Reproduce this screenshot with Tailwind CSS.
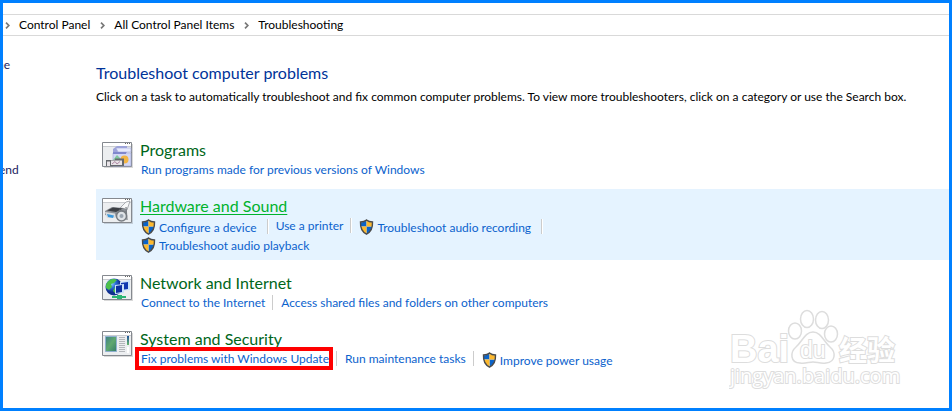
<!DOCTYPE html>
<html lang="en">
  <head>
    <meta charset="UTF-8" />
    <meta name="viewport" content="width=device-width, initial-scale=1.0" />
    <title>Troubleshooting</title>
    <script src="https://cdn.jsdelivr.net/npm/@tailwindcss/browser@4"></script>
  </head>
  <body class="relative flex min-h-screen flex-col overflow-x-hidden border-3 border-[#0080ff] bg-white font-[Lato,'Open_Sans',sans-serif] text-[12px] text-black">
    <!-- Shared symbols -->
    <svg class="absolute size-0">
      <clipPath id="shield-clip"><path d="M7 1.2 C5.3 2.7 3.2 3.2 1.1 3.2 C.8 8.5 2.4 12.6 7 14.8 C11.6 12.6 13.2 8.5 12.9 3.2 C10.8 3.2 8.7 2.7 7 1.2Z" /></clipPath>
      <symbol id="shield" viewBox="0 0 14 16">
        <g clip-path="url(#shield-clip)">
          <path fill="#0a63c9" d="M0 0H7V7.6H0zM7 7.6H14V16H7z" />
          <path fill="#fdb92e" d="M7 0H14V7.6H7zM0 7.6H7V16H0z" />
        </g>
        <path fill="none" stroke="#4a4a4a" stroke-width="1.4" d="M7 1 C5.3 2.5 3.2 3 1 3 C.7 8.5 2.4 12.8 7 15.1 C11.6 12.8 13.3 8.5 13 3 C10.8 3 8.7 2.5 7 1Z" />
      </symbol>
      <symbol id="chevron" viewBox="0 0 5 7">
        <path fill="none" stroke="#777" stroke-width="1.7" d="M1 .7 3.8 3.5 1 6.3" />
      </symbol>
      <symbol id="window" viewBox="0 0 31 26">
        <path fill="#000" opacity=".15" d="M2 2H31V26H2z" />
        <path fill="#eceef0" stroke="#85898f" d="M.5 .5H29.5V24.5H.5z" />
        <path fill="#fff" d="M1 1H29V4H1z" />
        <path stroke="#c9ccd0" d="M1 4.5H29" />
        <path fill="#666" d="M23 1h1v1h-1zM25 1h1v1h-1zM27 1h1v1h-1z" />
      </symbol>
    </svg>

    <!-- Address bar -->
    <nav class="mt-[11px] flex h-[22px] shrink-0 items-center border-y border-[#d9d9d9] pl-0.5" aria-label="Breadcrumb">
      <svg class="mr-[9px] h-[7px] w-[5px]"><use href="#chevron" /></svg>
      <a href="#">Control Panel</a>
      <svg class="ml-2.5 mr-[9px] h-[7px] w-[5px]"><use href="#chevron" /></svg>
      <a href="#">All Control Panel Items</a>
      <svg class="ml-2.5 mr-[9px] h-[7px] w-[5px]"><use href="#chevron" /></svg>
      <a href="#">Troubleshooting</a>
    </nav>

    <div class="flex grow">
      <!-- Side links, scrolled out to the left -->
      <aside class="flex w-[93px] shrink-0 flex-col items-start gap-[89px] overflow-hidden pt-[21px] leading-4 text-[#1a1a5e]">
        <a href="#" class="-ml-1.5">ne</a>
        <a href="#" class="-ml-1">end</a>
      </aside>

      <main class="min-w-0 grow pt-[25px]">
        <h1 class="text-[16px] leading-6 text-[#003399]">Troubleshoot computer problems</h1>
        <p class="mt-1 leading-4">Click on a task to automatically troubleshoot and fix common computer problems. To view more troubleshooters, click on a category or use the Search box.</p>

        <div class="mt-7 flex flex-col gap-1.5 leading-[15px] text-[#0b62cd]">
          <section class="flex gap-[7px] py-1.5 pl-1.5">
            <svg class="mt-[3px] h-[26px] w-[31px] shrink-0" viewBox="0 0 31 26">
              <use href="#window" />
              <path fill="#9da3da" d="M11 7 15 4H25V18H11z" />
              <path fill="#e6e9fc" stroke="#a3a8d8" stroke-width=".6" d="M14 6H29V10H16z" />
              <path fill="#d3d7f5" stroke="#a3a8d8" stroke-width=".6" d="M11 11H29V24H11z" />
              <path fill="#8087cc" d="M11 10H24V12H11z" />
              <path fill="#7fc79b" d="M11 18 15 13 20 18z" />
              <circle cx="22.500" cy="17.500" r="4" fill="#f2b544" />
              <path fill="#66696d" d="M4 18H13V16.500H22V24H4z" />
              <path fill="#e9e4e8" d="M5 19.500H8V24H5zM9 18.500H20V23H9z" />
              <path fill="none" stroke="#b08aa5" d="M10 22 13 19.500 15 22 18 19.500" />
            </svg>
            <div>
              <h2 class="mb-px text-[16px] leading-[22px] text-[#00661a]"><a href="#">Programs</a></h2>
              <a href="#" class="ml-px">Run programs made for previous versions of Windows</a>
            </div>
          </section>

          <section class="flex gap-[7px] bg-[#e5f3ff] py-1.5 pl-1.5">
            <svg class="mt-[3px] h-[26px] w-[31px] shrink-0" viewBox="0 0 31 26">
              <use href="#window" />
              <path fill="#f7f8f9" stroke="#a8abb0" d="M18 10 24 4 28 3 25 12z" />
              <path fill="#8d9197" d="M3 13 10 9 22 10 25 12 24 17 12 19 3 17z" />
              <path fill="#3d4045" d="M5 12.500 11 9.500 21 10.500 14 14z" />
              <path fill="#d9dcdf" d="M3 14 13 15.500 14 20 5 20z" />
              <path fill="#3a98dc" d="M5 16 12 17.500 11 20 6 19z" />
              <circle cx="19.500" cy="18" r="5" fill="#dfe3e7" stroke="#777c82" stroke-width="1.5" />
              <circle cx="19.500" cy="18" r="2" fill="#9aa5b0" />
              <path fill="none" stroke="#777c82" stroke-width="1.2" d="M24 9 25 22M17 12 24 14" />
            </svg>
            <div>
              <h2 class="mb-px text-[16px] leading-[22px] text-[#00b22d]"><a href="#" class="underline underline-offset-2">Hardware and Sound</a></h2>
              <div class="ml-px flex items-start">
                <a href="#" class="flex h-[18px] items-center gap-[3px]"><svg class="h-4 w-[15px]"><use href="#shield" /></svg>Configure a device</a>
                <span class="ml-2.5 mr-[7px] mt-px h-[15px] w-0.5 border-l border-[#ccc] bg-white"></span>
                <a href="#">Use a printer</a>
                <span class="mx-[7px] h-[15px] w-0.5 border-l border-[#ccc] bg-white"></span>
                <a href="#" class="flex h-[18px] items-center gap-[3px]"><svg class="h-4 w-[15px]"><use href="#shield" /></svg>Troubleshoot audio recording</a>
                <span class="ml-2.5 mt-px h-[15px] w-0.5 border-l border-[#ccc] bg-white"></span>
              </div>
              <a href="#" class="ml-px flex h-[18px] items-center gap-[3px]"><svg class="h-4 w-[15px]"><use href="#shield" /></svg>Troubleshoot audio playback</a>
            </div>
          </section>

          <section class="flex gap-[7px] py-1.5 pl-1.5">
            <svg class="mt-[3px] h-[26px] w-[31px] shrink-0" viewBox="0 0 31 26">
              <defs>
                <radialGradient id="globe" cx=".35" cy=".3"><stop offset="0" stop-color="#8fd0ff" /><stop offset=".5" stop-color="#2b6fd6" /><stop offset="1" stop-color="#10308f" /></radialGradient>
              </defs>
              <use href="#window" />
              <circle cx="12" cy="12" r="8.5" fill="url(#globe)" />
              <path fill="#4dc04a" d="M4 10 C6 4 12 3 15 5 L12 8 9 9 10 12 7 15 4 13zM13 12 17 13 14 19 11 16z" />
              <path fill="#c9e2fa" d="M18 7 28 5V15L18 16z" />
              <path fill="#1039b0" d="M19 8 26 7V14L19 15z" />
              <path fill="#c9e2fa" d="M13 10 22 9V18L13 19z" />
              <path fill="#0d2f9f" d="M14 11 20 10V17L14 18z" />
              <path fill="#2bb673" d="M10 21H24V23H10zM15 20H20V24H15z" />
            </svg>
            <div>
              <h2 class="mb-px text-[16px] leading-[22px] text-[#00661a]"><a href="#">Network and Internet</a></h2>
              <div class="ml-px flex items-start">
                <a href="#">Connect to the Internet</a>
                <span class="mx-[7px] h-[15px] w-0.5 border-l border-[#ccc]"></span>
                <a href="#">Access shared files and folders on other computers</a>
              </div>
            </div>
          </section>

          <section class="flex gap-[7px] py-1.5 pl-1.5">
            <svg class="mt-[3px] h-[26px] w-[31px] shrink-0" viewBox="0 0 31 26">
              <defs>
                <linearGradient id="screen" x2="1" y2="1"><stop offset="0" stop-color="#3f7f86" /><stop offset=".5" stop-color="#5fa86f" /><stop offset="1" stop-color="#347b6c" /></linearGradient>
                <linearGradient id="meter" x2="0" y2="1"><stop offset="0" stop-color="#1d4f9a" /><stop offset="1" stop-color="#67b96b" /></linearGradient>
              </defs>
              <use href="#window" />
              <path fill="url(#screen)" stroke="#8fb0d0" d="M3.5 5.5H14.5V20.5H3.5z" />
              <path stroke="#b4b7bb" d="M17 6.5H23M17 8.5H23M17 10.5H23M17 12.5H23M17 14.5H23M17 16.5H23M17 18.5H23M17 20.5H23" />
              <path fill="url(#meter)" d="M25 5H27V14H25z" />
              <path fill="#fff" d="M25 16H27V22H25z" />
            </svg>
            <div>
              <h2 class="mb-px text-[16px] leading-[22px] text-[#00661a]"><a href="#">System and Security</a></h2>
              <div class="ml-px flex items-start">
                <a href="#" class="relative">Fix problems with Windows Update<span class="absolute -inset-x-1 -inset-y-1 -left-1.5 border-4 border-[#f00]"></span></a>
                <span class="mx-[7px] h-[15px] w-0.5 border-l border-[#ccc]"></span>
                <a href="#">Run maintenance tasks</a>
                <span class="mx-[7px] h-[15px] w-0.5 border-l border-[#ccc]"></span>
                <a href="#" class="flex h-[18px] items-center gap-[3px]"><svg class="h-4 w-[15px]"><use href="#shield" /></svg>Improve power usage</a>
              </div>
            </div>
          </section>
        </div>
      </main>
    </div>

    <!-- Watermark -->
    <svg class="absolute bottom-4 right-12 h-[86px] w-[172px]" viewBox="0 0 172 86" fill="#fff" stroke="#ddd" stroke-width="1.5">
      <ellipse cx="66" cy="25" rx="6.5" ry="8" />
      <ellipse cx="78" cy="13" rx="6.5" ry="8.5" />
      <ellipse cx="93" cy="14" rx="6.5" ry="8.5" />
      <ellipse cx="102" cy="28" rx="6.5" ry="8" />
      <path d="M84 26 C76 26 73 36 67 41 C61 46 61 57 71 57 C76 58 80 56 84 56 C88 56 92 58 97 57 C107 56 107 46 101 41 C95 36 92 26 84 26Z" />
      <g font-family="Liberation Sans, sans-serif" font-weight="700" paint-order="stroke">
        <text x="1" y="56" font-size="38" stroke-width="2">Bai</text>
        <text x="71" y="52" font-size="23" font-weight="400" stroke-width="2">du</text>
        <text x="110" y="55" font-size="28" stroke-width="2" font-family="Noto Sans CJK SC, sans-serif">经验</text>
        <text x="1" y="77" font-size="20" font-weight="400" stroke-width="2" font-family="Open Sans, sans-serif">jingyan.baidu.com</text>
      </g>
    </svg>
  </body>
</html>
